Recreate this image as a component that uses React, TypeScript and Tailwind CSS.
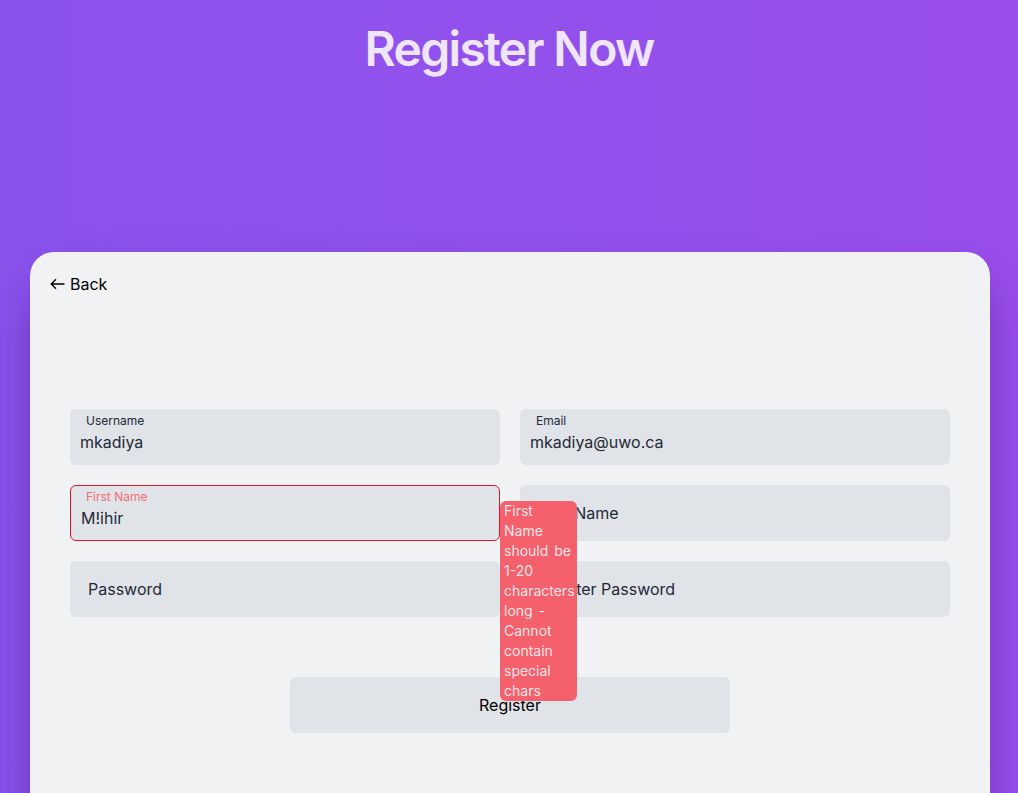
import { useState } from "react";

const font = { fontFamily: "Inter, 'Noto Sans', sans-serif" };

function Field({
  label,
  value,
  placeholder,
  error,
  children,
}: {
  label?: string;
  value?: string;
  placeholder?: string;
  error?: boolean;
  children?: React.ReactNode;
}) {
  return (
    <div
      className={
        "relative h-14 rounded-md bg-[#e0e3e8] " +
        (error ? "border border-[#e8112d]" : "")
      }
    >
      {label && (
        <span
          className={
            "absolute left-[16px] top-[4px] text-xs leading-4 " +
            (error ? "text-[#f56b75]" : "text-[#1f2937]")
          }
          style={error ? { top: 3, left: 15 } : undefined}
        >
          {label}
        </span>
      )}
      {value ? (
        <div
          className="absolute left-[10px] top-[21px] text-base leading-6 text-[#1f2937]"
          style={error ? { top: 20 } : undefined}
        >
          {value}
        </div>
      ) : (
        <div className="flex h-full items-center pl-[18px] text-base text-[#1f2937]">
          {placeholder}
        </div>
      )}
      {children}
    </div>
  );
}

export default function App() {
  const [name] = useState("M!ihir");
  return (
    <div
      className="h-[793px] overflow-hidden bg-linear-to-r from-[#8a53ed] to-[#9a4eeb]"
      style={font}
    >
      <h1 className="pt-[25px] text-center text-5xl leading-none font-semibold tracking-[-0.035em] text-[#efe6fd]">
        Register Now
      </h1>

      <div className="ml-[30px] mt-[179px] h-[600px] w-[960px] rounded-3xl bg-[#f0f2f4] shadow-2xl shadow-[#3b1a78]/70">
        <div className="flex items-center gap-[5px] pl-[20px] pt-[20px] text-base leading-6 text-black">
          <svg width="15" height="12" viewBox="0 0 15 12" fill="none" stroke="currentColor" strokeWidth="1.3">
            <path d="M14.5 6H1.2M6 1.2L1.2 6L6 10.8" />
          </svg>
          <span>Back</span>
        </div>

        <form className="px-10 pt-[113px]">
          <div className="grid grid-cols-2 gap-5">
            <Field label="Username" value="mkadiya" />
            <Field label="Email" value="mkadiya@uwo.ca" />
            <Field label="First Name" value={name} error>
              <div className="absolute left-[calc(100%+1px)] top-[15px] z-10 w-[77px] rounded-md bg-[#f4606c] pl-[4px] text-sm leading-5 text-[#fde4e7] [word-spacing:2px]">
                First Name should be 1-20 characters long - Cannot contain special chars
              </div>
            </Field>
            <Field placeholder="Last Name" />
            <Field placeholder="Password" />
            <Field placeholder="Reenter Password" />
          </div>
          <div className="mt-[60px] flex justify-center">
            <button
              type="button"
              className="h-14 w-[440px] rounded-md bg-[#e0e3e8] text-base text-black"
            >
              Register
            </button>
          </div>
        </form>
      </div>
    </div>
  );
}
